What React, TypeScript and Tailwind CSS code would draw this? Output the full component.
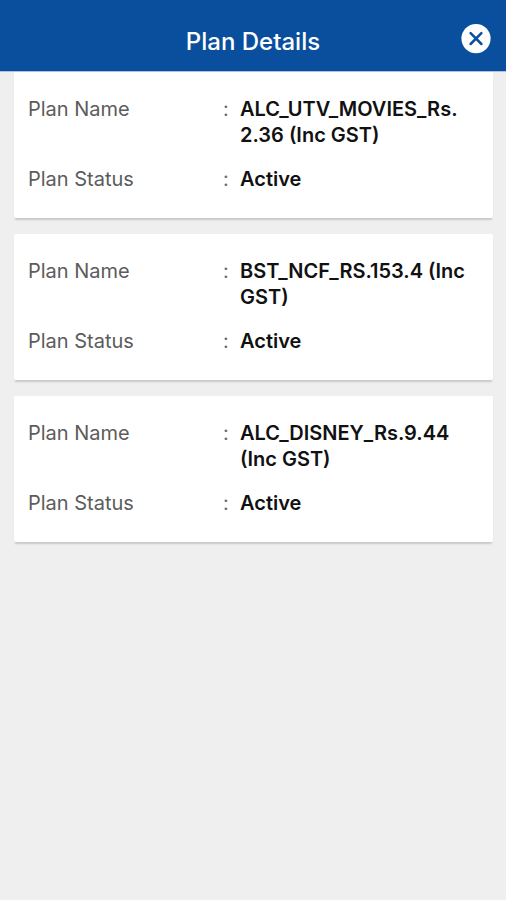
import { JSX } from 'react'

interface Plan {
  name: string
  status: string
}

const PLANS: Plan[] = [
  { name: 'ALC_UTV_MOVIES_Rs.\n2.36 (Inc GST)', status: 'Active' },
  { name: 'BST_NCF_RS.153.4 (Inc\nGST)', status: 'Active' },
  { name: 'ALC_DISNEY_Rs.9.44\n(Inc GST)', status: 'Active' }
]

function CloseIcon(): JSX.Element {
  return (
    <svg viewBox="0 0 30 30" className="size-[30px]" aria-hidden="true">
      <circle cx="15" cy="14.6" r="14.6" fill="#fff" />
      <path d="M9.6 9.2 20.4 20M20.4 9.2 9.6 20" stroke="#0a4f9e" strokeWidth="2.5" strokeLinecap="round" />
    </svg>
  )
}

function PlanRow({ label, value }: { label: string; value: string }): JSX.Element {
  return (
    <div className="grid grid-cols-[195px_17px_1fr]">
      <dt className="text-[#5c5c5c]">{label}</dt>
      <span className="text-[#6c6c6c]">:</span>
      <dd className="font-semibold whitespace-pre-line text-[#111]">{value}</dd>
    </div>
  )
}

function PlanCard({ plan }: { plan: Plan }): JSX.Element {
  return (
    <dl className="flex flex-col gap-[18px] rounded-xs bg-white px-[14px] pt-6 pb-[26px] shadow-[0_3px_2px_-1px_#c8c8c8] first:rounded-t-none">
      <PlanRow label="Plan Name" value={plan.name} />
      <PlanRow label="Plan Status" value={plan.status} />
    </dl>
  )
}

export default function App(): JSX.Element {
  return (
    <div className="min-h-screen bg-[#efefef] font-[Inter,'Liberation_Sans',sans-serif] text-[20px] leading-[26px]">
      <header className="grid h-[72px] grid-cols-[1fr_auto_1fr] border-b border-[#a9c3e0] bg-[#0a4f9e] px-[15px] pt-6">
        <h1 className="col-start-2 pt-1 text-[24px] leading-[28px] font-medium text-white">Plan Details</h1>
        <button type="button" aria-label="Close" className="size-[30px] justify-self-end">
          <CloseIcon />
        </button>
      </header>
      <main className="flex flex-col gap-4 pr-[13px] pb-4 pl-[14px]">
        {PLANS.map((plan) => (
          <PlanCard key={plan.name} plan={plan} />
        ))}
      </main>
    </div>
  )
}
